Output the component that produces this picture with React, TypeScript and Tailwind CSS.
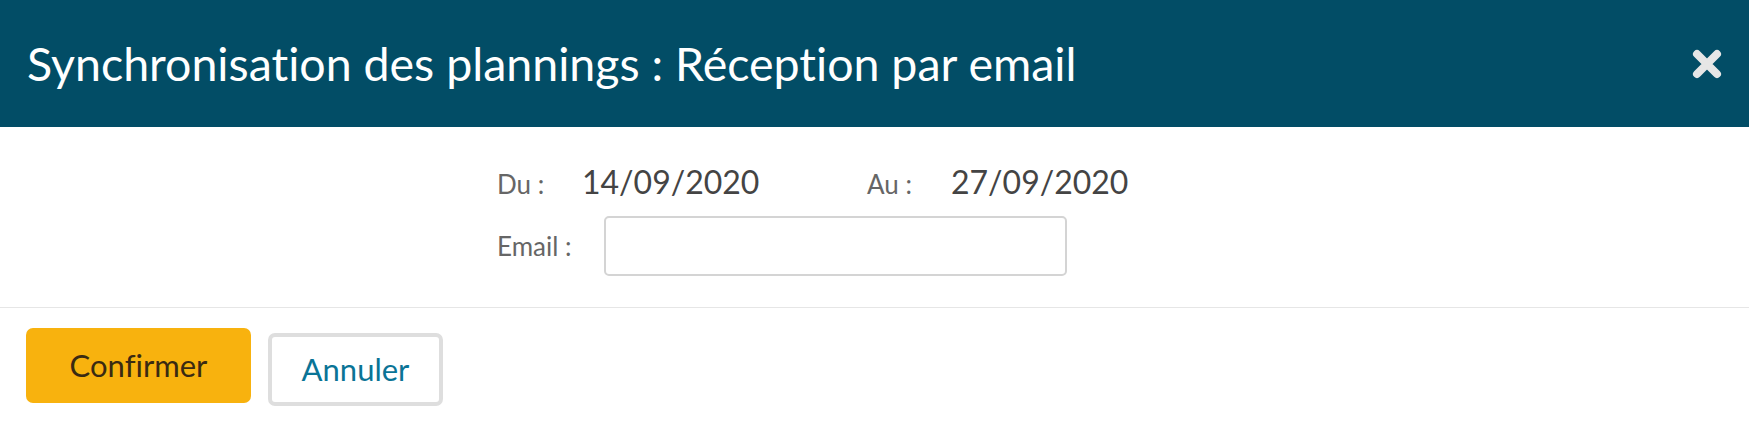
export default function App() {
	return (
		<div className="w-[1749px] h-[421px] bg-white font-['Lato',sans-serif] overflow-hidden [font-variant-ligatures:none]">
			<div className="h-[127px] bg-[#024d66] flex items-center justify-between pl-[27px] pr-[27px]">
				<h1 className="text-white text-[46.5px] leading-none">
					Synchronisation des plannings : Réception par email
				</h1>
				<button className="w-[30px] h-[30px] flex items-center justify-center">
					<svg viewBox="0 0 30 30" className="w-[30px] h-[30px]">
						<path
							d="M5 5 L25 25 M25 5 L5 25"
							stroke="#e6e6e6"
							strokeWidth="8"
							strokeLinecap="round"
						/>
					</svg>
				</button>
			</div>
			<div className="h-[180px] pl-[497px] pt-[31px]">
				<div className="flex items-baseline h-[42px]">
					<span className="w-[85px] text-[26px] text-[#666]">Du :</span>
					<span className="w-[285px] text-[32px] text-[#444]">14/09/2020</span>
					<span className="w-[84px] text-[26px] text-[#666]">Au :</span>
					<span className="text-[32px] text-[#444]">27/09/2020</span>
				</div>
				<div className="flex items-center mt-[16px]">
					<span className="w-[107px] text-[26px] text-[#666]">Email :</span>
					<input className="w-[463px] h-[60px] border-2 border-[#d4d4d4] rounded-[5px] outline-none px-3" />
				</div>
			</div>
			<div className="border-t border-[#e6e6e6] flex items-start gap-[17px] pl-[26px] pt-[20px]">
				<button className="w-[225px] h-[75px] bg-[#f8b20e] rounded-[7px] text-[31px] text-[#3a2a12]">
					Confirmer
				</button>
				<button className="mt-[5px] w-[175px] h-[73px] border-4 border-[#dedede] rounded-[7px] text-[31px] text-[#0a7496] bg-white">
					Annuler
				</button>
			</div>
		</div>
	);
}
